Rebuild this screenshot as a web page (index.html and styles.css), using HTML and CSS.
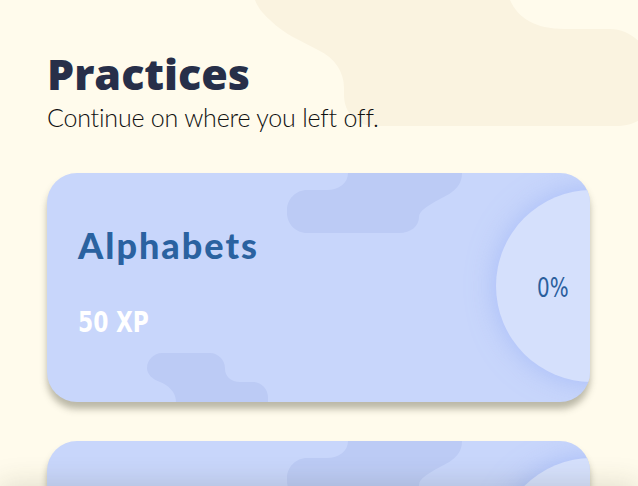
FILE: index.html
```html
<!DOCTYPE html>
<html lang="en">
<head>
<meta charset="utf-8">
<title>Practices</title>
<link rel="stylesheet" href="styles.css">
</head>
<body>
<svg class="bg-blob" width="638" height="160" viewBox="0 0 638 160" aria-hidden="true">
  <path d="M255,0 H510 C518,18 535,29 565,29 H610 C630,29 650,45 650,70 V100 C650,115 638,126 615,126 H375 C357,126 344,113 344,95 V88 C344,72 335,58 318,50 C300,40 285,35 270,20 C262,13 257,6 255,0 Z" fill="#faf3e0"/>
</svg>
<main class="page">
  <header class="head">
    <h1 class="title">Practices</h1>
    <p class="subtitle">Continue on where you left off.</p>
  </header>
  <section class="list">
    <article class="card">
      <svg class="card-blobs" width="543" height="229" viewBox="0 0 543 229" aria-hidden="true">
        <path d="M301,0 H415 C415,14 405,20 393,26 C380,33 372,38 372,44 C372,53 364,60 352,60 H260 C249,60 240,51 240,40 V37 C240,26 249,17 260,17 H280 C292,17 301,10 301,0 Z" fill="#bccbf5"/>
        <path d="M115,180 H163 C171,180 178,187 178,195 V196 C178,203 184,209 193,209 H206 C214,209 221,216 221,224 V229 H129 C129,219 121,212 113,209 C105,206 100,201 100,195 C100,187 107,180 115,180 Z" fill="#bccbf5"/>
      </svg>
      <div class="progress"><span class="pct">0%</span></div>
      <div class="card-body">
        <h2 class="card-title">Alphabets</h2>
        <p class="xp">50 XP</p>
      </div>
    </article>
    <article class="card" aria-hidden="true">
      <svg class="card-blobs" width="543" height="229" viewBox="0 0 543 229">
        <path d="M301,0 H415 C415,14 405,20 393,26 C380,33 372,38 372,44 C372,53 364,60 352,60 H260 C249,60 240,51 240,40 V37 C240,26 249,17 260,17 H280 C292,17 301,10 301,0 Z" fill="#bccbf5"/>
        <path d="M115,180 H163 C171,180 178,187 178,195 V196 C178,203 184,209 193,209 H206 C214,209 221,216 221,224 V229 H129 C129,219 121,212 113,209 C105,206 100,201 100,195 C100,187 107,180 115,180 Z" fill="#bccbf5"/>
      </svg>
      <div class="progress"></div>
    </article>
  </section>
</main>
<div class="bottom-bar"></div>
</body>
</html>
```
FILE: styles.css
```css
html, body {
  margin: 0;
  padding: 0;
}
body {
  background: #fffbec;
  width: 638px;
  height: 486px;
  overflow: hidden;
  position: relative;
}
.bg-blob {
  position: absolute;
  left: 0;
  top: 0;
  z-index: 0;
}
.page {
  position: relative;
  z-index: 1;
  padding: 48px 48px 0 47px;
}
.head {
  display: flex;
  flex-direction: column;
}
.title {
  margin: 0;
  font-family: "Open Sans", sans-serif;
  font-weight: 800;
  font-size: 43px;
  line-height: 52px;
  color: #272f49;
  letter-spacing: 0;
}
.subtitle {
  margin: 2px 0 0 0;
  font-family: "Lato", sans-serif;
  font-weight: 300;
  font-size: 25px;
  line-height: 30px;
  color: #111111;
  letter-spacing: -0.2px;
}
.list {
  display: flex;
  flex-direction: column;
  gap: 39px;
  margin-top: 41px;
}
.card {
  position: relative;
  width: 543px;
  height: 229px;
  flex: none;
  border-radius: 30px;
  background: #c8d6fb;
  overflow: hidden;
  box-shadow: 0 7px 7px rgba(60, 60, 40, 0.35);
}
.card-blobs {
  position: absolute;
  left: 0;
  top: 0;
}
.progress {
  position: absolute;
  left: 449px;
  top: 17px;
  width: 192px;
  height: 192px;
  border-radius: 50%;
  background: #d5e0fc;
  box-shadow: 0 0 28px rgba(140, 165, 245, 0.55);
  display: flex;
  align-items: center;
}
.pct {
  margin: 4px 0 0 41px;
  font-family: "DejaVu Sans Condensed", "DejaVu Sans", sans-serif;
  font-size: 26px;
  color: #2a5e9c;
  transform: scaleX(0.85);
  transform-origin: left center;
}
.card-body {
  position: relative;
  display: flex;
  flex-direction: column;
  align-items: flex-start;
  padding: 50px 0 0 31px;
}
.card-title {
  margin: 0;
  font-family: "Lato", sans-serif;
  font-weight: 900;
  font-size: 36px;
  line-height: 44px;
  color: #2a62a0;
  letter-spacing: 2px;
}
.xp {
  margin: 40px 0 0 0;
  font-family: "DejaVu Sans", sans-serif;
  font-weight: 700;
  font-size: 28px;
  line-height: 32px;
  color: #ffffff;
  transform: scaleX(0.78);
  transform-origin: left center;
}
.bottom-bar {
  position: fixed;
  left: 0;
  right: 0;
  bottom: -60px;
  height: 60px;
  background: #ffffff;
  box-shadow: 0 0 30px rgba(60, 60, 30, 0.18);
  z-index: 2;
}
```
